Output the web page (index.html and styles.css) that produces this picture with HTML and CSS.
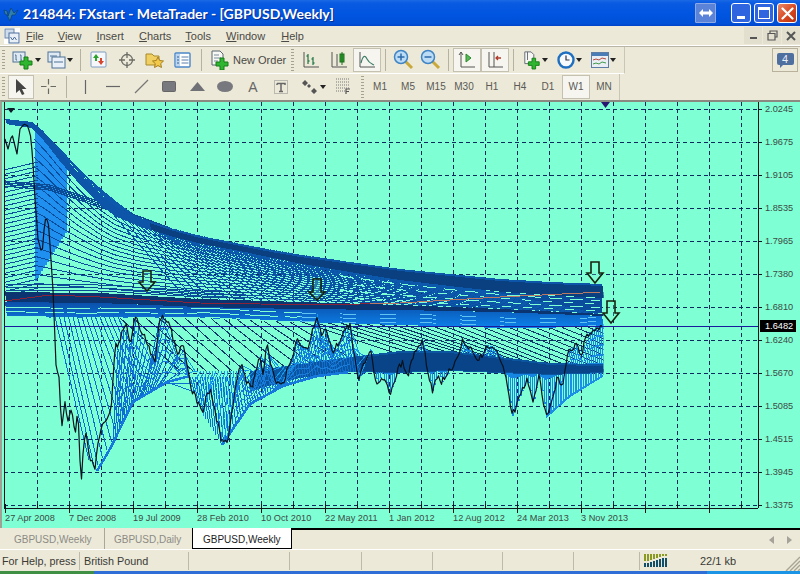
FILE: index.html
```html
<!DOCTYPE html>
<html lang="en">
<head>
<meta charset="utf-8">
<title>214844: FXstart - MetaTrader - [GBPUSD,Weekly]</title>
<link rel="stylesheet" href="styles.css">
</head>
<body>
<div class="window">
  <header class="titlebar">
    <svg class="app-icon" width="16" height="16" viewBox="0 0 16 16"><path d="M1 5l3 1 1 5 3-8 3 5 4-3-3 5-3 0-2 6-3-6-2-1z" fill="#2f7fa8" stroke="#0b3f7a" stroke-width=".7"/></svg>
    <h1 class="title">214844: FXstart - MetaTrader - [GBPUSD,Weekly]</h1>
    <div class="wbtn wbtn-swap"><svg width="14" height="10" viewBox="0 0 14 10"><path d="M0 5l4-4v2.500h6V1l4 4-4 4V6.500H4V9z" fill="#fff"/></svg></div>
    <div class="wbtn wbtn-min"><span class="min-bar"></span></div>
    <div class="wbtn wbtn-max"><span class="max-box"></span></div>
    <div class="wbtn wbtn-close"><svg width="13" height="13" viewBox="0 0 13 13"><path d="M1.500 1.500l10 10M11.500 1.500l-10 10" stroke="#fff" stroke-width="2.200" stroke-linecap="round"/></svg></div>
  </header>

  <nav class="menubar">
    <svg class="doc-icon" width="16" height="16" viewBox="0 0 16 16"><rect width="16" height="16" fill="#fff"/><rect x="1" y="1" width="9" height="9" fill="#cfdcec" stroke="#6c86a8"/><rect x="5" y="5" width="10" height="10" fill="#e8eff7" stroke="#4d6f9c"/><path d="M6.500 9l2 3 2-3 2 3" fill="none" stroke="#4d6f9c"/></svg>
    <span class="menu-item m-file"><u>F</u>ile</span>
    <span class="menu-item m-view"><u>V</u>iew</span>
    <span class="menu-item m-insert"><u>I</u>nsert</span>
    <span class="menu-item m-charts"><u>C</u>harts</span>
    <span class="menu-item m-tools"><u>T</u>ools</span>
    <span class="menu-item m-window"><u>W</u>indow</span>
    <span class="menu-item m-help"><u>H</u>elp</span>
    <div class="mdi-btns">
      <span class="mdi-btn"><svg width="9" height="9" viewBox="0 0 9 9"><rect x="1" y="6" width="7" height="2" fill="#555"/></svg></span>
      <span class="mdi-btn"><svg width="11" height="11" viewBox="0 0 11 11"><path d="M3 3V1h7v6H8M1 3.500h7V10H1z" fill="none" stroke="#555" stroke-width="1.200"/></svg></span>
      <span class="mdi-btn"><svg width="10" height="10" viewBox="0 0 10 10"><path d="M1 1l8 8M9 1l-8 8" stroke="#555" stroke-width="2"/></svg></span>
    </div>
  </nav>

  <div class="toolbars">
    <div class="tb-rows">
      <div class="toolbar tb-one">
        <span class="grip"></span>
        <span class="btn drop w34 pad3">
          <svg width="22" height="20" viewBox="0 0 22 20"><rect x="1" y="2" width="12" height="10" fill="#dfe9f3" stroke="#4f7296"/><path d="M3 5h1v5h1M8 5h1v5h1" fill="none" stroke="#4f7296"/><path d="M12 7h4v4h4v4h-4v4h-4v-4H8v-4h4z" fill="#2fb52f" stroke="#167d16"/></svg><i class="caret"></i>
        </span>
        <span class="btn drop w34 pad5">
          <svg width="19" height="20" viewBox="0 0 19 20"><rect x="1" y="2" width="12" height="10" fill="#dfe9f3" stroke="#4f7296"/><rect x="5" y="7" width="13" height="11" fill="#e9f0f7" stroke="#4f7296"/><path d="M7 12h9M3 6h7" stroke="#4f7296"/></svg><i class="caret"></i>
        </span>
        <span class="sep"></span>
        <span class="btn">
          <svg width="18" height="18" viewBox="0 0 18 18"><rect x="1" y="1" width="15" height="15" rx="1" fill="#f5f7fb" stroke="#7f9dc4"/><path d="M6 3l3 4H7v3H5V7H3z" fill="#2aa32a"/><path d="M11 14l-3-4h2V7h2v3h2z" fill="#d8452b"/></svg>
        </span>
        <span class="btn">
          <svg width="18" height="18" viewBox="0 0 18 18"><circle cx="9" cy="9" r="5.500" fill="none" stroke="#6d6d66" stroke-width="1.300"/><path d="M9 1v6M9 11v6M1 9h6M11 9h6" stroke="#6d6d66" stroke-width="1.300"/></svg>
        </span>
        <span class="btn">
          <svg width="20" height="18" viewBox="0 0 20 18"><path d="M1 3h6l2 2h5v9H1z" fill="#f0cf63" stroke="#a78a2c"/><path d="M13 6l1.700 3.500 3.800.500-2.800 2.600.8 3.900-3.500-1.900-3.500 1.900.8-3.900L7.500 10l3.800-.500z" fill="#f2c94a" stroke="#a67f20"/></svg>
        </span>
        <span class="btn">
          <svg width="18" height="18" viewBox="0 0 18 18"><rect x="1" y="2" width="15" height="14" rx="1" fill="#fff" stroke="#4a86c8" stroke-width="1.400"/><rect x="2" y="3" width="4" height="12" fill="#bcd6f0"/><path d="M7.500 6h7M7.500 9h7M7.500 12h7" stroke="#5a7ea8"/><path d="M3 6h2M3 9h2M3 12h2" stroke="#2f5f9c"/></svg>
        </span>
        <span class="sep"></span>
        <span class="btn order">
          <svg width="20" height="20" viewBox="0 0 20 20"><path d="M2 1h8l3 3v11H2z" fill="#f7f7f4" stroke="#5b6470"/><path d="M4 5h5M4 8h7M4 11h4" stroke="#7b8a9c"/><path d="M10 8h4v4h4v4h-4v4h-4v-4H6v-4h4z" fill="#2fb52f" stroke="#167d16"/></svg>
          <span class="btn-text">New Order</span>
        </span>
        <span class="sep-grip"></span>
        <span class="btn">
          <svg width="18" height="18" viewBox="0 0 18 18"><path d="M2 1v15h15" fill="none" stroke="#555" /><path d="M6 3v10M4.500 5H6M6 10h1.500M11 6v8M9.500 8H11M11 12h1.500" fill="none" stroke="#2f7d4f" stroke-width="1.300"/></svg>
        </span>
        <span class="btn">
          <svg width="18" height="18" viewBox="0 0 18 18"><path d="M2 1v15h15" fill="none" stroke="#555"/><path d="M7 3v12" stroke="#555"/><rect x="10" y="3" width="4" height="8" fill="#2ca02c" stroke="#1e6e1e"/><path d="M12 1v13" stroke="#1e6e1e"/></svg>
        </span>
        <span class="btn on">
          <svg width="18" height="18" viewBox="0 0 18 18"><path d="M2 1v15h15" fill="none" stroke="#555"/><path d="M3 12c2-8 4-8 6-4s3 4 7 6" fill="none" stroke="#3e7d6a" stroke-width="1.200"/></svg>
        </span>
        <span class="sep"></span>
        <span class="btn w26">
          <svg width="21" height="21" viewBox="0 0 21 21"><path d="M12 12l7 7" stroke="#c9a93c" stroke-width="3"/><circle cx="8" cy="8" r="6.500" fill="#bcdcf6" stroke="#3f84c4" stroke-width="1.500"/><path d="M8 4.500v7M4.500 8h7" stroke="#2d6aa8" stroke-width="1.500"/></svg>
        </span>
        <span class="btn w28">
          <svg width="21" height="21" viewBox="0 0 21 21"><path d="M12 12l7 7" stroke="#c9a93c" stroke-width="3"/><circle cx="8" cy="8" r="6.500" fill="#bcdcf6" stroke="#3f84c4" stroke-width="1.500"/><path d="M4.500 8h7" stroke="#2d6aa8" stroke-width="1.500"/></svg>
        </span>
        <span class="sep"></span>
        <span class="btn on">
          <svg width="18" height="18" viewBox="0 0 18 18"><path d="M3 1v15h14" fill="none" stroke="#555"/><path d="M1 4l2-3 2 3" fill="none" stroke="#555"/><path d="M8 3l5 4-5 4z" fill="#56b856" stroke="#2d8a2d"/></svg>
        </span>
        <span class="btn on">
          <svg width="18" height="18" viewBox="0 0 18 18"><path d="M3 1v15h14M8 1v15" fill="none" stroke="#555"/><path d="M10 7h5M12 5l-2 2 2 2" fill="none" stroke="#b03a2a" stroke-width="1.300"/></svg>
        </span>
        <span class="sep"></span>
        <span class="btn drop w34 pad5">
          <svg width="18" height="20" viewBox="0 0 20 20"><path d="M2 1h7l3 3v10H2z" fill="#f7f7f4" stroke="#5b6470"/><path d="M5 1v9" stroke="#5b6470"/><path d="M10 8h4v4h4v4h-4v4h-4v-4H6v-4h4z" fill="#2fb52f" stroke="#167d16"/></svg><i class="caret"></i>
        </span>
        <span class="btn drop w34 pad5">
          <svg width="18" height="18" viewBox="0 0 18 18"><circle cx="9" cy="9" r="7.500" fill="#f6fafd" stroke="#1f6fc0" stroke-width="2.400"/><path d="M9 4.500V9h3.500" fill="none" stroke="#334" stroke-width="1.200"/></svg><i class="caret"></i>
        </span>
        <span class="btn drop w34 pad5">
          <svg width="18" height="16" viewBox="0 0 18 16"><rect x=".5" y=".5" width="17" height="15" fill="#e9eef4" stroke="#5c7ea6"/><rect x="1" y="1" width="16" height="3" fill="#4a7db6"/><path d="M2 8l3-1 3 1 3-2 4 1" fill="none" stroke="#b44a3a"/><path d="M2 12l3-1 3 1 3-2 4 1" fill="none" stroke="#3e9a4a"/></svg><i class="caret"></i>
        </span>
      </div>

      <div class="toolbar tb-two">
        <span class="grip"></span>
        <span class="btn on w26">
          <svg width="14" height="18" viewBox="0 0 14 18"><path d="M2 1v14l3.500-3 2.500 5 2.500-1-2.500-5h4.500z" fill="#444"/></svg>
        </span>
        <span class="btn">
          <svg width="17" height="17" viewBox="0 0 17 17"><path d="M8.500 1v5.500M8.500 10.500V16M1 8.500h5.500M10.500 8.500H16" stroke="#6a6a64" stroke-width="1.200"/></svg>
        </span>
        <span class="sep"></span>
        <span class="btn"><svg width="3" height="14" viewBox="0 0 3 14"><path d="M1.500 0v14" stroke="#666" stroke-width="1.200"/></svg></span>
        <span class="btn"><svg width="14" height="3" viewBox="0 0 14 3"><path d="M0 1.500h14" stroke="#666" stroke-width="1.200"/></svg></span>
        <span class="btn"><svg width="15" height="15" viewBox="0 0 15 15"><path d="M1 14L14 1" stroke="#777" stroke-width="1.200"/></svg></span>
        <span class="btn"><svg width="14" height="11" viewBox="0 0 14 11"><rect x=".5" y=".5" width="13" height="10" rx="1" fill="#77797e" stroke="#666"/></svg></span>
        <span class="btn"><svg width="15" height="9" viewBox="0 0 15 9"><path d="M7.500 0L15 9H0z" fill="#6f7177"/></svg></span>
        <span class="btn"><svg width="16" height="11" viewBox="0 0 16 11"><ellipse cx="8" cy="5.500" rx="8" ry="5.500" fill="#77797e"/></svg></span>
        <span class="btn glyph">A</span>
        <span class="btn"><svg width="14" height="14" viewBox="0 0 14 14"><rect x=".5" y=".5" width="13" height="13" fill="none" stroke="#888" stroke-dasharray="1 1"/><path d="M3 3.500h8v1.500M7 3.500v8M5 11.500h4M3 3.500V5" fill="none" stroke="#666" stroke-width="1.500"/></svg></span>
        <span class="btn drop w34 pad7">
          <svg width="15" height="14" viewBox="0 0 15 14"><path d="M0 3l3-3 3 3-3 3zM5 6l2-2 2 2-2 2zM9 11l3-3 3 3-3 3z" fill="#555"/></svg><i class="caret"></i>
        </span>
        <span class="btn">
          <svg width="15" height="17" viewBox="0 0 15 17"><path d="M0 1h13M0 4h13M0 7h13M0 10h13M0 13h9" stroke="#777" stroke-dasharray="1 1"/><path d="M10 16v-5h4M10 13.500h3" fill="none" stroke="#555" stroke-width="1.200"/></svg>
        </span>
        <span class="sep-grip s2"></span>
        <span class="btn tf">M1</span>
        <span class="btn tf">M5</span>
        <span class="btn tf">M15</span>
        <span class="btn tf">M30</span>
        <span class="btn tf">H1</span>
        <span class="btn tf">H4</span>
        <span class="btn tf">D1</span>
        <span class="btn tf on">W1</span>
        <span class="btn tf">MN</span>
      </div>
    </div>
    <div class="notify">
      <span class="bubble">4</span>
    </div>
  </div>

  <main class="chart-wrap">
    <svg id="chart" class="chart" width="800" height="425" viewBox="0 103 800 425">
      <g id="plot"></g>
      <g class="y-axis">
        <text x="765" y="113">2.0245</text>
        <text x="765" y="146">1.9675</text>
        <text x="765" y="179">1.9105</text>
        <text x="765" y="212">1.8535</text>
        <text x="765" y="245">1.7965</text>
        <text x="765" y="278">1.7380</text>
        <text x="765" y="311">1.6810</text>
        <text x="765" y="344">1.6240</text>
        <text x="765" y="377">1.5670</text>
        <text x="765" y="410">1.5085</text>
        <text x="765" y="443">1.4515</text>
        <text x="765" y="476">1.3945</text>
        <text x="765" y="509">1.3375</text>
      </g>
      <rect class="price-tag" x="760" y="321" width="36" height="12"/>
      <text class="price-tag-text" x="765" y="330">1.6482</text>
      <g class="x-axis">
        <text x="5" y="522">27 Apr 2008</text>
        <text x="69" y="522">7 Dec 2008</text>
        <text x="133" y="522">19 Jul 2009</text>
        <text x="197" y="522">28 Feb 2010</text>
        <text x="261" y="522">10 Oct 2010</text>
        <text x="325" y="522">22 May 2011</text>
        <text x="389" y="522">1 Jan 2012</text>
        <text x="453" y="522">12 Aug 2012</text>
        <text x="517" y="522">24 Mar 2013</text>
        <text x="581" y="522">3 Nov 2013</text>
      </g>
    </svg>
  </main>

  <div class="tabs">
    <span class="tab">GBPUSD,Weekly</span>
    <span class="tab tab-b">GBPUSD,Daily</span>
    <span class="tab tab-active">GBPUSD,Weekly</span>
    <span class="tab-rest">
      <svg width="6" height="8" viewBox="0 0 6 8"><path d="M5 0v8L0 4z" fill="#a5a398"/></svg>
      <svg width="6" height="8" viewBox="0 0 6 8"><path d="M1 0v8l5-4z" fill="#a5a398"/></svg>
    </span>
  </div>

  <footer class="status">
    <span class="cell c-help">For Help, press</span>
    <span class="cell c-pound">British Pound</span>
    <span class="cell c3"></span>
    <span class="cell c4"></span>
    <span class="cell c5"></span>
    <span class="cell c6"></span>
    <span class="cell c7"></span>
    <span class="cell c8"></span>
    <span class="cell c-conn">
      <svg width="24" height="13" viewBox="0 0 24 13"><path class="bars-top" d="M1 0v7M4 0v7M7 0v6M10 0v5M13 0v4M16 0v3M19 0v2M22 0v2"/><path class="bars-bot" d="M1 9v4M4 9v4M7 8v5M10 7v6M13 6v7M16 5v8M19 4v9M22 4v9"/></svg>
    </span>
    <span class="cell c-kb">22/1 kb</span>
    <svg class="resize" width="15" height="15" viewBox="0 0 15 15"><path d="M15 1L1 15M15 5L5 15M15 9L9 15M15 13l-2 2" stroke="#a9a594" stroke-width="1.400"/></svg>
  </footer>
  <div class="taskbar"><span class="tb-start"></span><span class="tb-mid"></span><span class="tb-tray"></span></div>
</div>
<script src="chart.js"></script>
</body>
</html>
```

FILE: styles.css
```css
* { box-sizing: border-box; }
html, body { margin: 0; padding: 0; }
body { width: 800px; height: 574px; overflow: hidden; background: #ece9d8; font-family: "Liberation Sans", sans-serif; }
.window { width: 800px; height: 574px; display: flex; flex-direction: column; }

.titlebar { height: 26px; flex: none; display: flex; align-items: center; padding: 0 3px 0 3px; background: linear-gradient(#1a6ae6 0, #0a5ae2 12%, #0055e0 55%, #0050d8 90%, #0044c8 100%); }
.app-icon { flex: none; margin-right: 4px; }
.title { margin: 0; flex: 1; color: #fff; font: bold 14px Lato, "Liberation Sans", sans-serif; text-shadow: 1px 1px 0 #0a2f90; white-space: nowrap; }
.wbtn { flex: none; width: 20px; height: 20px; border: 1px solid #fff; border-radius: 3px; display: flex; align-items: center; justify-content: center; margin-left: 3px; background: #2f66e0; }
.wbtn-swap { width: 21px; margin-right: 12px; background: #5b83d8; border-color: #8fa9e4; border-radius: 1px; }
.wbtn-close { background: linear-gradient(135deg, #e88a6a, #d8481f 55%, #b8300e); }
.min-bar { width: 8px; height: 3px; background: #fff; margin-top: 9px; margin-right: 1px; }
.max-box { width: 12px; height: 12px; border: 1px solid #fff; border-top-width: 3px; }

.menubar { height: 20px; flex: none; display: flex; align-items: center; font-size: 11px; color: #4a4a46; border-bottom: 1px solid #fff; padding-left: 4px; background: #ece9d8; }
.doc-icon { flex: none; margin-right: 6px; }
.menu-item { flex: none; line-height: 20px; }
.m-view { margin-left: 14px; }
.m-insert { margin-left: 15px; }
.m-charts { margin-left: 15px; }
.m-tools { margin-left: 14px; }
.m-window { margin-left: 15px; }
.m-help { margin-left: 16px; }
.mdi-btns { margin-left: auto; display: flex; gap: 1px; }
.mdi-btn { width: 18px; height: 17px; display: flex; align-items: center; justify-content: center; background: #e2dfcf; }

.toolbars { flex: none; height: 54px; display: flex; border-top: 1px solid #b8b5a4; position: relative; }
.tb-rows { display: flex; flex-direction: column; }
.toolbar { height: 27px; display: flex; align-items: center; padding-left: 1px; border-right: 1px solid #c9c6b5; border-bottom: 1px solid #fff; background: #ece9d8; }
.tb-one { width: 625px; }
.tb-two { width: 620px; border-bottom: none; }
.grip { width: 3px; height: 20px; margin: 0 3px 0 1px; flex: none; background: repeating-linear-gradient(#a5a28f 0 1px, #ece9d8 1px 3px); }
.btn { flex: none; width: 28px; height: 24px; display: flex; align-items: center; justify-content: center; border: 1px solid transparent; color: #555; }
.w26 { width: 26px; }
.w28 { width: 28px; }
.w34 { width: 34px; }
.btn.on { background: #f6f5ef; border-color: #c4c1b0; }
.drop { justify-content: flex-start; gap: 1px; }
.pad3 { padding-left: 3px; }
.pad5 { padding-left: 4px; }
.pad7 { padding-left: 6px; gap: 3px; }
.caret { flex: none; width: 0; height: 0; border-left: 3.500px solid transparent; border-right: 3.500px solid transparent; border-top: 4px solid #222; }
.sep { flex: none; width: 1px; height: 22px; margin: 0 4px; background: #b5b2a1; }
.sep-grip { flex: none; width: 3px; height: 22px; margin: 0 3px; background: repeating-linear-gradient(#a5a28f 0 1px, #ece9d8 1px 3px); }
.s2 { margin: 0 2px 0 4px; }
.order { width: 82px; justify-content: flex-start; gap: 3px; padding-left: 3px; }
.btn-text { font-size: 11px; color: #4a4a46; white-space: nowrap; }
.glyph { font-size: 14px; color: #666; }
.tf { font-size: 10px; color: #5a5a56; }
.notify { position: absolute; right: 2px; top: 1px; width: 26px; height: 24px; border: 1px solid #b8b19c; display: flex; align-items: center; justify-content: center; }
.bubble { width: 17px; height: 12px; margin-bottom: 2px; background: #4f6f9f; border-radius: 2px; color: #e8eef6; font-size: 11px; line-height: 12px; text-align: center; position: relative; }
.bubble::after { content: ""; position: absolute; left: 3px; top: 12px; border-top: 3px solid #4f6f9f; border-right: 3px solid transparent; }

.chart-wrap { flex: none; height: 428px; border-top: 2px solid #8a8a82; border-left: 2px solid #a0a094; background: #7fffd4; overflow: hidden; }
.chart { display: block; margin-left: -2px; }
.y-axis text, .x-axis text { fill: #3c4a44; font-size: 9.200px; }
.x-axis text { letter-spacing: .02px; }
.price-tag { fill: #000; }
.price-tag-text { fill: #fff; font-size: 9.200px; }

.tabs { flex: none; height: 21px; display: flex; border-top: 2px solid #000; background: #ece9d8; font-size: 10px; }
.tab { flex: none; width: 105px; padding-left: 14px; line-height: 19px; color: #8b8b85; white-space: nowrap; margin-top: -2px; padding-top: 2px; background: #ece9d8; border-right: 1px solid #aaa79a; }
.tab-b { width: 87px; padding-left: 9px; border-right: none; }
.tab-active { width: 100px; padding-left: 10px; color: #222; background: #fff; border: 1px solid #000; border-top: none; margin-top: -2px; height: 21px; }
.tab-rest { flex: 1; display: flex; justify-content: flex-end; align-items: center; gap: 11px; padding-right: 8px; }

.status { flex: none; height: 22px; display: flex; align-items: center; position: relative; border-top: 1px solid #fff; font-size: 10.800px; color: #3a3a36; }
.cell { flex: none; height: 18px; line-height: 18px; border-right: 1px solid #bdbaa9; padding-left: 2px; white-space: nowrap; overflow: hidden; }
.c-help { width: 80px; }
.c-pound { width: 109px; padding-left: 4px; }
.c3 { width: 101px; }
.c4 { width: 72px; }
.c5 { width: 71px; }
.c6 { width: 70px; }
.c7 { width: 71px; }
.c8 { width: 66px; }
.c-conn { width: 58px; padding-left: 4px; padding-top: 2px; border-right: none; }
.c-kb { border-right: none; font-size: 11px; }
.bars-top { stroke: #8a9a20; stroke-width: 2; fill: none; }
.bars-bot { stroke: #12506a; stroke-width: 2; fill: none; }
.resize { position: absolute; right: 0; bottom: 0; }

.taskbar { flex: none; height: 4px; display: flex; }
.tb-start { width: 94px; background: #3f8f45; }
.tb-mid { flex: 1; background: #2f6ed6; }
.tb-tray { width: 93px; background: #1c94e6; }
```

FILE: chart.js
```js
// Builds the chart drawing (grid, moving-average ribbons, price line) from data.
(function () {
  const NS = 'http://www.w3.org/2000/svg';
  const root = document.getElementById('plot');

  const curve = pts => x => {
    if (x <= pts[0][0]) return pts[0][1];
    for (let i = 1; i < pts.length; i++) {
      if (x <= pts[i][0]) {
        const [a, b] = pts[i - 1], [c, d] = pts[i];
        return b + (d - b) * (x - a) / (c - a);
      }
    }
    return pts[pts.length - 1][1];
  };
  function el(name, attrs, parent) {
    const e = document.createElementNS(NS, name);
    for (const k in attrs) e.setAttribute(k, attrs[k]);
    (parent || root).appendChild(e);
    return e;
  }
  const line = (d, stroke, w, parent, extra) => el('path', Object.assign({ d, stroke, 'stroke-width': w, fill: 'none', 'shape-rendering': 'crispEdges' }, extra || {}), parent);
  function poly(top, bot, x0, x1, fill, parent, step) {
    let d = '', s = step || 3;
    for (let x = x0; x <= x1; x += s) d += (d ? 'L' : 'M') + x + ' ' + top(x).toFixed(1);
    for (let x = x1; x >= x0; x -= s) d += 'L' + x + ' ' + bot(x).toFixed(1);
    return el('path', { d: d + 'Z', fill, 'shape-rendering': 'crispEdges' }, parent);
  }
  function path(f, x0, x1, step) {
    let d = '';
    for (let x = x0; x <= x1; x += step) d += (d ? 'L' : 'M') + x + ' ' + f(x).toFixed(1);
    return d;
  }

  const defs = el('defs', {});
  const clip = el('clipPath', { id: 'ribbon' }, defs);
  el('rect', { x: 4, y: 103, width: 599.5, height: 410 }, clip);

  // grid
  let gd = '';
  for (let x = 37; x <= 741; x += 32) gd += `M${x + .5} 103V509`;
  for (let y = 110; y <= 506; y += 33) gd += `M4 ${y + .5}H758`;
  line(gd, '#0d2a5e', 1, root, { 'stroke-dasharray': '4 3' });

  const g = el('g', { 'clip-path': 'url(#ribbon)' });

  const U = curve([[5, 120], [32, 123], [45, 134], [60, 153], [80, 176], [100, 196], [115, 207], [140, 219], [170, 229], [200, 237], [230, 243], [260, 249], [300, 256], [350, 263], [400, 270], [450, 275], [500, 280], [550, 283], [604, 285]]);
  const thick = curve([[5, 5], [32, 6], [45, 9], [100, 10], [115, 10], [160, 8], [250, 7], [350, 10], [450, 12], [604, 14]]);
  const darkTop = curve([[5, 293], [100, 294], [200, 300], [300, 303], [400, 306], [500, 310], [604, 315]]);
  const darkBot = curve([[5, 303], [100, 304], [200, 308], [300, 310], [400, 311], [500, 313], [604, 317]]);
  const blueBot = curve([[5, 318], [100, 319], [200, 319], [300, 323], [400, 326], [500, 329], [604, 328]]);
  const M = curve([[5, 182], [50, 186], [100, 203], [135, 216], [170, 229]]);
  const red = curve([[5, 302], [50, 296], [100, 298], [200, 304], [320, 306], [400, 304], [500, 298], [604, 293]]);
  const slowTop = curve([[250, 372], [300, 365], [350, 358], [400, 352], [450, 352], [500, 358], [550, 364], [604, 365]]);
  const slowBot = curve([[250, 392], [300, 379], [350, 373], [400, 374], [450, 372], [500, 374], [550, 376], [604, 374]]);
  const E1 = curve([[55, 405], [70, 440], [85, 462], [97, 472], [110, 450], [133, 403], [167, 383], [190, 377], [250, 372]]);
  const E2 = curve([[190, 385], [205, 418], [222, 446], [250, 405], [283, 387], [317, 377], [350, 373]]);
  const E3 = curve([[546, 418], [570, 397], [604, 376]]);
  const Pbase = curve([[5, 140], [8, 150], [12, 135], [17, 155], [20, 130], [24, 125], [28, 127], [31, 140], [33, 165], [35, 200], [38, 240], [42, 254], [45, 220], [48, 220], [50, 245], [53, 290], [55, 340], [56, 365], [60, 384], [61, 432], [65, 400], [68, 424], [72, 408], [75, 440], [78, 410], [81, 485], [85, 430], [88, 450], [95, 473], [98, 445], [103, 425], [108, 422], [112, 400], [115, 345], [118, 352], [122, 330], [126, 326], [130, 345], [135, 315], [140, 330], [145, 340], [150, 352], [155, 362], [160, 320], [165, 316], [172, 335], [178, 357], [183, 345], [190, 385], [196, 400], [203, 417], [205, 400], [210, 390], [218, 425], [222, 445], [228, 440], [232, 410], [236, 385], [241, 362], [245, 380], [252, 390], [260, 357], [263, 373], [267, 346], [273, 377], [282, 387], [293, 355], [297, 342], [308, 350], [317, 315], [322, 342], [325, 327], [333, 355], [343, 332], [350, 328], [358, 382], [370, 350], [377, 385], [382, 375], [390, 393], [402, 362], [408, 375], [413, 357], [422, 340], [432, 392], [438, 373], [442, 383], [450, 372], [463, 342], [478, 362], [487, 346], [495, 348], [505, 373], [512, 417], [527, 380], [533, 405], [539, 373], [546, 418], [557, 380], [563, 383], [568, 350], [577, 345], [580, 358], [588, 335], [597, 327], [603, 328]]);

  // price with weekly jitter (deterministic)
  const jitter = [];
  let seed = 7;
  for (let i = 0; i < 320; i++) { seed = (seed * 1103515245 + 12345) & 0x7fffffff; jitter.push((seed >> 16) % 9 - 4); }
  const P = x => Pbase(x) + (x > 30 ? jitter[Math.floor(x / 2)] * (x < 60 ? .3 : .9) : 0);

  // light-blue flare behind the 2008 fall
  let fl = '';
  for (let x = 36; x <= 66; x += 2) fl += `M${x} ${U(x) + 4}V${282 - (x - 36) * 1.6}`;
  line(fl, '#1f8ff0', 1.3, g);

  // contours between the top envelope and the dark band
  const N = 18;
  let cd = '';
  for (let k = 1; k < N; k++) {
    const f = x => { const t = U(x) + thick(x); return t + (darkTop(x) - t) * k / N; };
    cd += path(f, 34, 604, 4);
  }
  line(cd, '#0a4d9c', 1, g);

  // crossing diagonals, left half of the mesh
  let dd = '';
  for (let t = 36; t <= 330; t += 6) {
    const w = 150 + (t - 36) * .4;
    dd += `M${t} ${U(t)}L${t + w} ${darkTop(t + w)}`;
  }
  line(dd, '#0c58ac', 1, g);
  let ld = '';
  for (let y = 168; y <= 294; y += 4.5) ld += `M4 ${y + 3}L38 ${y - 5}`;
  line(ld, '#0b4f9c', 1, g);

  // second dark ribbon inside the mesh
  let mr = '';
  for (let k = 0; k < 4; k++) mr += path(x => M(x) + k * 1.7, 5, 170, 4);
  line(mr, '#0b4a94', 1.2, g);

  // top band
  poly(U, x => U(x) + thick(x), 5, 604, '#0c55a8', g);
  poly(x => U(x) + 2, x => U(x) + thick(x), 150, 604, '#0a3f80', g);

  // aqua dashes showing through the dense right half
  let ad1 = '', ad2 = '';
  for (let k = 1; k <= 4; k++) {
    const f = x => { const t = U(x) + thick(x); return t + (darkTop(x) - t) * (k * 2 - .5) / 9; };
    if (k % 2) ad1 += path(f, 340, 604, 5); else ad2 += path(f, 340, 604, 5);
  }
  line(ad1, '#7fffd4', 1, g, { 'stroke-dasharray': '13 8' });
  line(ad2, '#7fffd4', 1, g, { 'stroke-dasharray': '9 12', 'stroke-dashoffset': 6 });

  // lower hatch between blue band and slow ribbon
  let hd = '';
  for (let t = 120; t <= 620; t += 13) {
    const dx = t < 300 ? 60 : 90;
    hd += `M${t} ${blueBot(t)}L${t + dx} ${t + dx > 250 ? slowTop(t + dx) : 372}`;
  }
  line(hd, '#0d3a6a', 1, g);

  // dark + blue bands
  const grad = el('linearGradient', { id: 'bandBlue', x1: 0, y1: 0, x2: 0, y2: 1 }, defs);
  el('stop', { offset: '0', 'stop-color': '#0a4fa8' }, grad);
  el('stop', { offset: '1', 'stop-color': '#0c82ec' }, grad);
  poly(darkBot, blueBot, 5, 604, 'url(#bandBlue)', g);
  poly(darkTop, darkBot, 5, 604, '#0a3570', g);
  // stripes through the blue band (dense aqua on the left, sparse on the right)
  const dashes = ['41 5 27 4', '33 7 19 3 52 6', '58 4 23 8'];
  for (let k = 0; k < 3; k++) {
    line(path(x => blueBot(x) - 1 - k * 4.5 + (x % 100) * .01, 5, 300, 5), '#7fffd4', 1, g, { 'stroke-dasharray': dashes[k] });
  }
  let br = '';
  for (let k = 0; k < 3; k++) br += path(x => blueBot(x) - 2 - k * 4 + Math.sin(x / 40), 300, 604, 6);
  line(br, '#5fc4f2', 1, g, { 'stroke-dasharray': '16 24' });
  let ul = '';
  for (let k = 0; k < 3; k++) ul += path(x => darkTop(x) - 2 - k * 3, 5, 250, 6);
  line(ul, '#0a4a94', 1, g);

  // slow ribbon
  poly(slowTop, slowBot, 250, 604, '#0b549f', g);
  poly(x => slowTop(x) + 2, x => slowBot(x) - 1, 360, 604, '#0a4488', g);

  // fans under the price
  const fan = '#0d6ed0';
  let f1 = '';
  for (let t = 55; t <= 118; t += 4.5) {
    const bx = t + 34;
    const by = t > 90 ? E1(bx) : Math.max(E1(bx) - 4, 400);
    f1 += `M${t} 318L${bx} ${by}`;
  }
  for (let t = 118; t <= 195; t += 3) {
    const bx = 100 + (t - 100) * .72;
    f1 += `M${t} ${Pbase(t)}L${bx} ${E1(bx)}`;
  }
  line(f1, fan, 1, g);
  let f2 = '';
  for (let t = 190; t <= 360; t += 2.5) {
    const bx = t + 6;
    f2 += `M${t} ${Math.min(Pbase(t), 378)}L${bx} ${E2(bx)}`;
  }
  line(f2, fan, 1, g);
  let f3 = '';
  for (let t = 185; t <= 360; t += 3) f3 += `M${t} ${Pbase(t)}L${t + 10} ${Math.min(slowTop(Math.max(t + 10, 250)), 372)}`;
  line(f3, '#1598e8', 1, g);
  // blue between price and the slow ribbon (above and below)
  let f5 = '';
  for (let t = 350; t <= 604; t += 2) {
    const y = Pbase(t);
    if (y < slowTop(t)) f5 += `M${t} ${y}L${t + 4} ${slowTop(t + 4)}`;
    else if (y > slowBot(t)) f5 += `M${t} ${slowBot(t)}L${t + 1} ${y}`;
  }
  line(f5, '#1586e2', 1.2, g);
  let f4 = '';
  for (let t = 546; t <= 604; t += 2.5) f4 += `M${t} ${Math.max(Pbase(t), slowBot(t))}L${t} ${E3(t)}`;
  line(f4, '#1b8ee6', 1.2, g);

  // lit edges of the fans
  line(path(E1, 97, 190, 3), '#1678dc', 2.5, g);
  line(path(E2, 222, 350, 3), '#1678dc', 2.5, g);
  line(path(E3, 546, 604, 3), '#1b8ee6', 2, g);
  let mesh = '';
  for (let k = 1; k < 6; k++) mesh += path(x => Pbase(x) + (E1(x) - Pbase(x)) * k / 6, 118, 190, 3);
  for (let k = 1; k < 6; k++) mesh += path(x => Pbase(x) + (E2(x) - Pbase(x)) * k / 6, 236, 350, 3);
  line(mesh, '#1a7ed8', 1, g);

  // red average
  line(path(red, 5, 370, 5), '#8b2338', 1, g);
  line(path(red, 370, 604, 5), '#b87a62', 1, g);

  // axis frame
  line('M4 509.500H758M758.500 103V509M4.500 103V509', '#11141a', 1);
  let ticks = '';
  for (let x = 5, i = 0; x <= 741; x += 32, i++) ticks += `M${x}.500 505V${i % 2 ? 510 : 514}`;
  for (let y = 110; y <= 506; y += 33) ticks += `M758 ${y}.500H762`;
  line(ticks, '#11141a', 1);

  // current price line
  line('M4 327.500H758', '#1a1a9c', 1);

  // price
  el('path', { d: path(P, 5, 603, 1.5), fill: 'none', stroke: '#06121e', 'stroke-width': 1.2, 'stroke-linejoin': 'round', 'clip-path': 'url(#ribbon)' });

  // marker triangles
  el('path', { d: 'M7 109h8l-4 5z', fill: '#0d1a2a' });
  el('path', { d: 'M601 103h9l-4.500 6z', fill: '#2a1670' });

  // hand-placed arrows
  const arrow = (cx, top, shaft, tip, half) => {
    const d = `M${cx - 4} ${top}H${cx + 4}V${shaft}H${cx + half}L${cx} ${tip}L${cx - half} ${shaft}H${cx - 4}z`;
    el('path', { d, fill: '#7fffd4', 'fill-opacity': .25, stroke: '#16240f', 'stroke-width': 1.6 });
  };
  arrow(147, 272, 283, 292, 8);
  arrow(317, 280, 293, 301, 8);
  arrow(595, 263, 274, 284, 8);
  arrow(611, 302, 314, 324, 8);
})();
```
